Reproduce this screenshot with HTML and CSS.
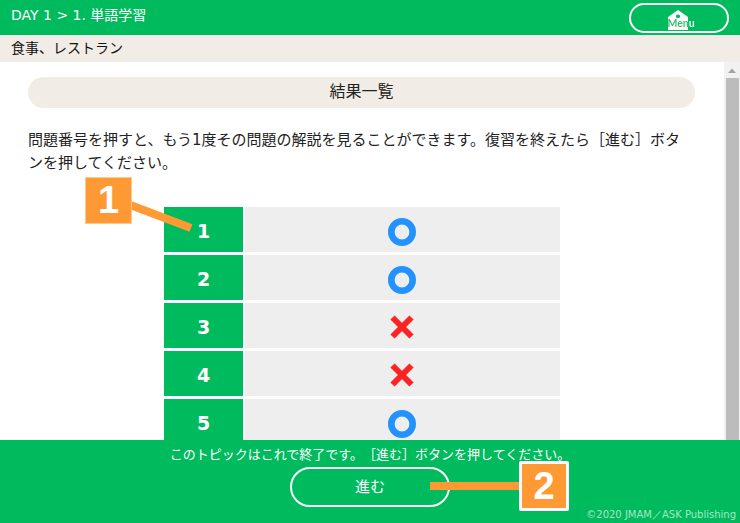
FILE: index.html
```html
<!DOCTYPE html>
<html lang="ja">
<head>
<meta charset="utf-8">
<title>結果一覧</title>
<link rel="stylesheet" href="styles.css">
</head>
<body>
<div class="page">
  <header class="top">
    <div class="crumb">DAY 1 &gt; 1. 単語学習</div>
    <button class="menu-btn">
      <span class="menu-icon">
        <svg width="20" height="20" viewBox="0 0 20 20"><path class="house" d="M0 7 10 0 20 7V20H0Z"/><rect class="dot" x="8" y="4.500" width="4" height="3.500" rx="1.500"/></svg>
        <span class="menu-label">Menu</span>
      </span>
    </button>
  </header>
  <div class="sub">食事、レストラン</div>
  <div class="middle">
    <main class="content">
      <h1 class="title">結果一覧</h1>
      <p class="lead">問題番号を押すと、もう1度その問題の解説を見ることができます。復習を終えたら［進む］ボタンを押してください。</p>
      <div class="results">
        <div class="row"><div class="num">1</div><div class="mark"><svg class="ok" viewBox="0 0 28 28"><circle cx="14" cy="14" r="10.700"/></svg></div></div>
        <div class="row"><div class="num">2</div><div class="mark"><svg class="ok" viewBox="0 0 28 28"><circle cx="14" cy="14" r="10.700"/></svg></div></div>
        <div class="row"><div class="num">3</div><div class="mark"><svg class="ng" viewBox="0 0 24 24"><path d="M2.500 2.500 21.500 21.500M21.500 2.500 2.500 21.500"/></svg></div></div>
        <div class="row"><div class="num">4</div><div class="mark"><svg class="ng" viewBox="0 0 24 24"><path d="M2.500 2.500 21.500 21.500M21.500 2.500 2.500 21.500"/></svg></div></div>
        <div class="row"><div class="num">5</div><div class="mark"><svg class="ok" viewBox="0 0 28 28"><circle cx="14" cy="14" r="10.700"/></svg></div></div>
      </div>
    </main>
    <div class="scrollbar">
      <svg class="scroll-up" width="16" height="16" viewBox="0 0 16 16"><path d="M4 11 8 6.500 12 11Z"/></svg>
      <div class="thumb"></div>
    </div>
  </div>
  <footer class="bottom">
    <p class="notice">このトピックはこれで終了です。［進む］ボタンを押してください。</p>
    <button class="next">進む</button>
    <small class="copy">©2020 JMAM／ASK Publishing</small>
  </footer>
  <svg class="leaders" width="740" height="523" viewBox="0 0 740 523"><path d="M129 204.500 191 228M430 486H525"/></svg>
  <div class="callout callout-one">1</div>
  <div class="callout callout-two">2</div>
</div>
</body>
</html>
```
FILE: styles.css
```css
* { box-sizing: border-box; }
html, body { margin: 0; height: 100%; overflow: hidden; }
body { font-family: "DejaVu Sans", "Noto Sans CJK JP", sans-serif; color: #222; background: #fff; text-spacing-trim: space-all; }
.page { position: relative; width: 740px; height: 523px; display: flex; flex-direction: column; overflow: hidden; }
.top { height: 35px; flex: none; background: #00bb5e; display: flex; align-items: center; justify-content: space-between; padding: 0 11px; color: #fff; }
.crumb { font-size: 14px; line-height: 30px; margin-bottom: 6px; }
.menu-btn { width: 100px; height: 30px; margin: 0; padding: 0; border: 2px solid #fff; border-radius: 15px; background: none; display: flex; justify-content: center; align-items: flex-start; }
.menu-icon { position: relative; display: block; width: 26px; height: 26px; margin-top: 4px; margin-left: 1px; }
.menu-icon svg { position: absolute; left: 1px; top: 1px; }
.house { fill: #fff; }
.dot { fill: #00bb5e; }
.menu-label { position: absolute; left: 1px; top: 8px; font: bold 10.500px/12px "Lato", sans-serif; color: transparent; background: linear-gradient(90deg, #2fbd6f 0 20px, #fff 20px); -webkit-background-clip: text; background-clip: text; }
.sub { height: 27px; flex: none; background: #f1ede6; font-size: 14px; line-height: 27px; padding-left: 11px; color: #111; }
.middle { height: 378px; flex: none; display: flex; }
.content { flex: 1; overflow: hidden; padding: 15px 29px 0 28px; }
.title { margin: 0; height: 31px; border-radius: 16px; background: #f1ede6; font-size: 16px; font-weight: 400; line-height: 29px; text-align: center; color: #222; }
.lead { margin: 21px 0 0; padding-right: 5px; font-size: 15px; line-height: 23px; color: #222; }
.results { width: 396px; margin: 32px 0 0 136px; display: flex; flex-direction: column; gap: 3px; }
.row { height: 45px; flex: none; display: flex; gap: 2px; }
.num { width: 79px; background: #00bb5e; color: #fff; font: bold 19px/48px "DejaVu Sans", sans-serif; text-align: center; }
.mark { flex: 1; background: #eee; display: flex; align-items: center; justify-content: center; padding: 2px 2px 0 0; }
.ok { width: 28px; height: 28px; margin-top: 3px; fill: none; stroke: #2492fb; stroke-width: 6.600; }
.ng { width: 24px; height: 24px; fill: none; stroke: #fb2323; stroke-width: 6; }
.scrollbar { width: 16px; flex: none; background: #f1f1f1; display: flex; flex-direction: column; align-items: center; }
.scroll-up { flex: none; }
.scroll-up path { fill: #a3a3a3; }
.thumb { width: 13px; flex: 1; background: #bcbcbc; }
.bottom { position: relative; height: 83px; flex: none; background: #00bb5e; color: #fff; display: flex; flex-direction: column; align-items: center; }
.notice { margin: 5px 0 0; font-size: 13px; line-height: 20px; }
.next { width: 160px; height: 40px; margin-top: 2px; border: 2px solid #fff; border-radius: 20px; background: none; color: #fff; font: 15px "Noto Sans CJK JP", sans-serif; padding: 0 0 3px; }
.copy { position: absolute; right: 4px; bottom: 0; font: 10px/16px "DejaVu Sans", sans-serif; color: #a5e6c4; }
.leaders { position: absolute; left: 0; top: 0; pointer-events: none; }
.leaders path { fill: none; stroke: #ff9933; stroke-width: 8; }
.callout { position: absolute; background: #ff9933; color: #fff; font: bold 38px/45px "Liberation Sans", sans-serif; text-align: center; }
.callout-one { left: 86px; top: 178px; width: 45px; height: 45px; box-shadow: 0 0 0 1px #ffc98f; }
.callout-two { left: 519px; top: 461px; width: 50px; height: 50px; border: 3px solid #fff; border-radius: 2px; line-height: 44px; }
```
